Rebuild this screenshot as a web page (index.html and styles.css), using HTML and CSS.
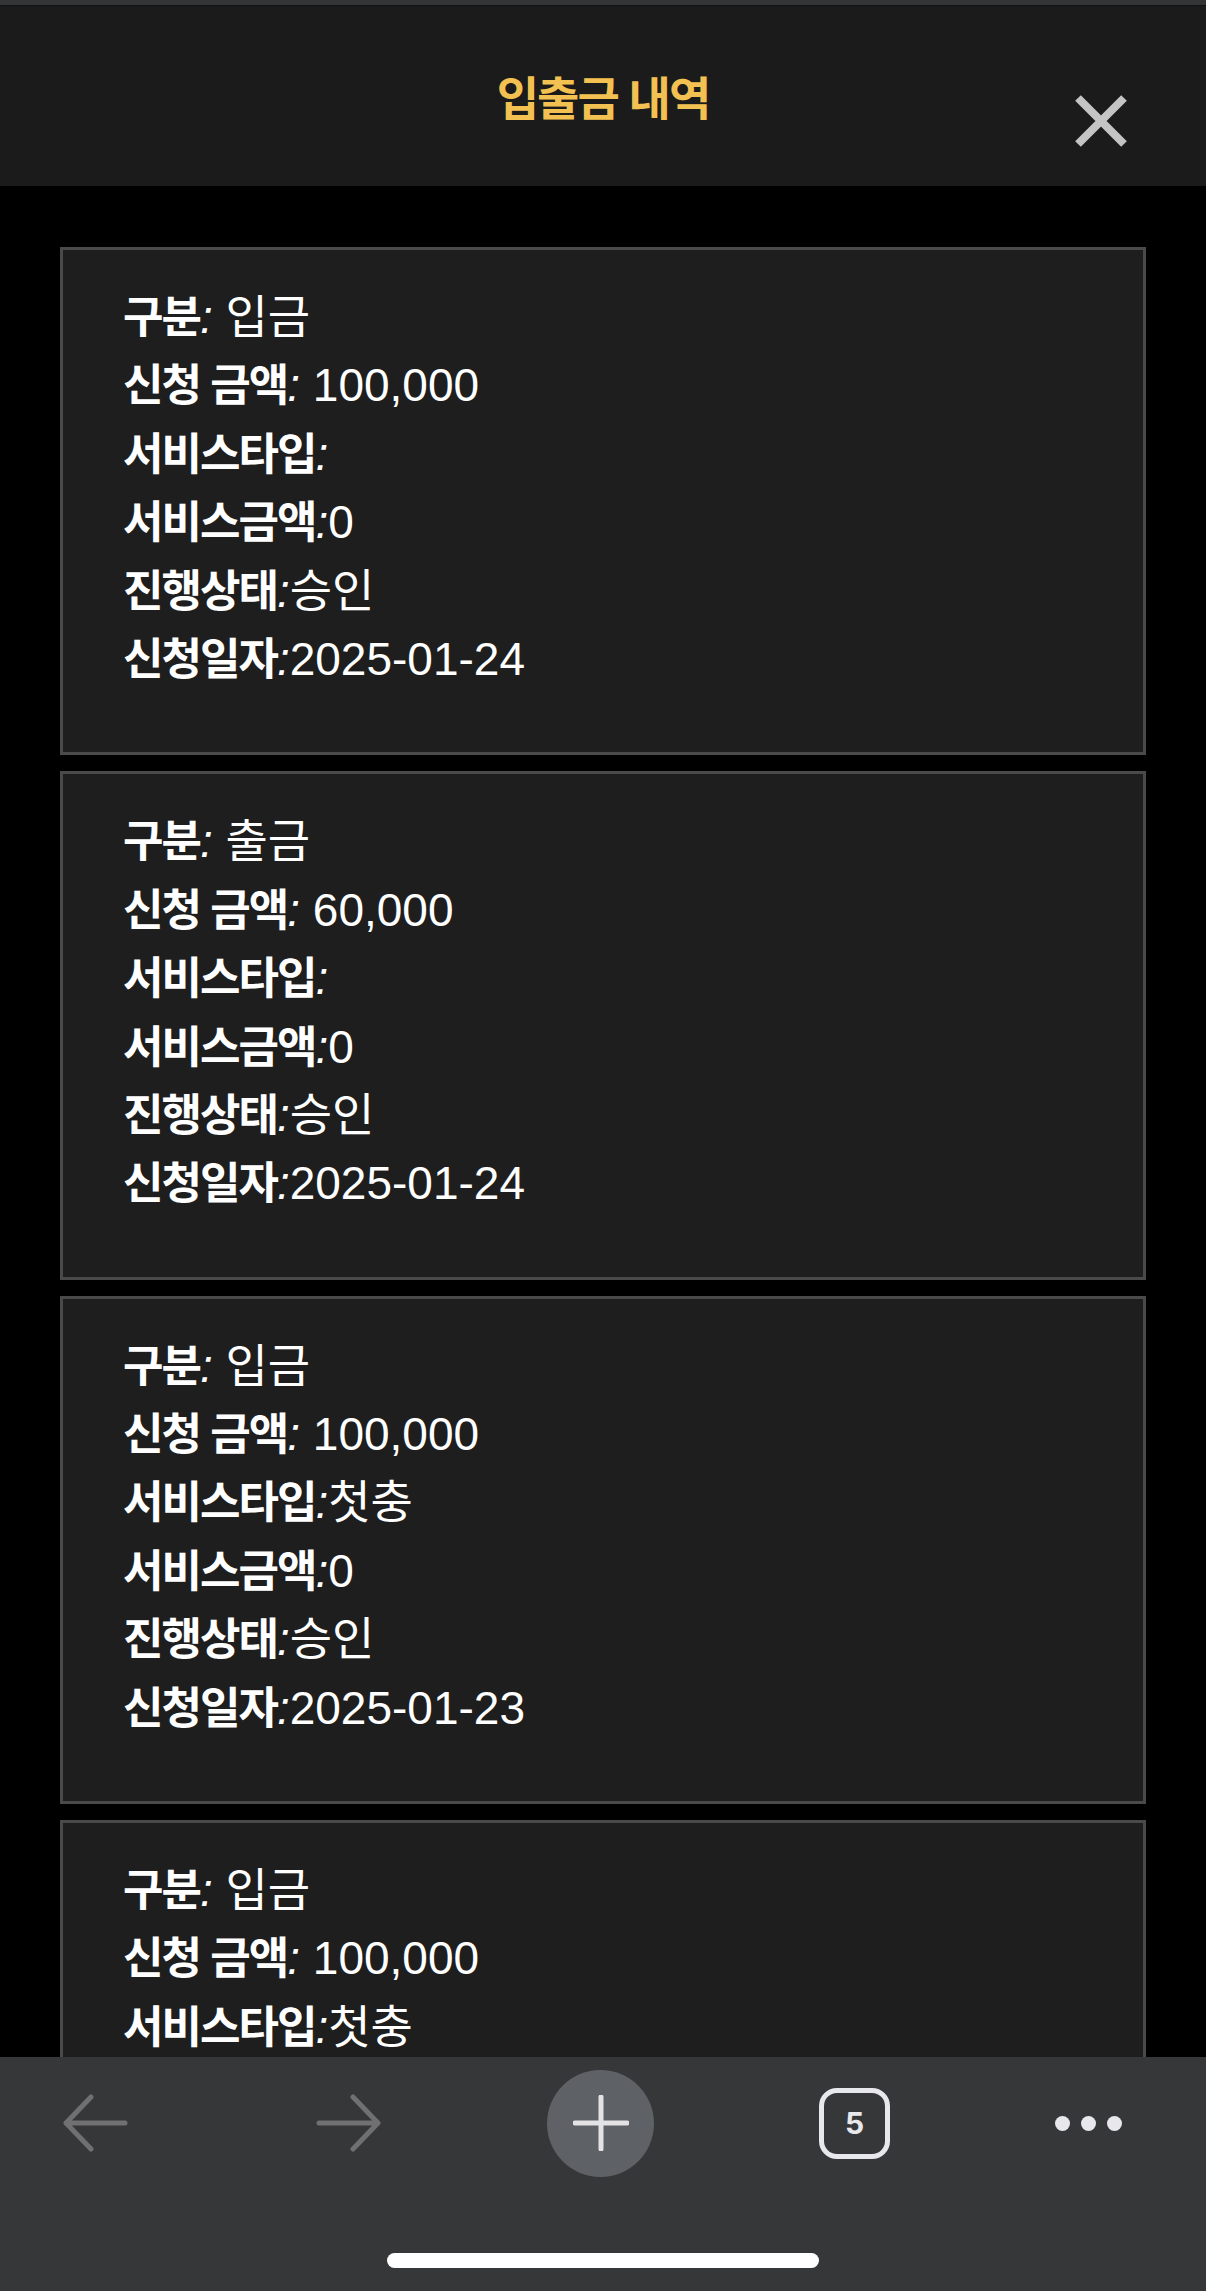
FILE: index.html
```html
<!DOCTYPE html>
<html lang="ko">
  <head>
    <meta charset="UTF-8" />
    <meta name="viewport" content="width=device-width, initial-scale=1.0" />
    <title>입출금 내역</title>
    <link rel="stylesheet" href="styles.css">
  </head>
  <body>
    <div class="status-strip"></div>
    <header class="header">
      <h1 class="title">입출금 내역</h1>
      <button class="close-btn" aria-label="닫기">
        <svg width="54" height="54" viewBox="0 0 54 54">
          <path d="M4 4 L50 50 M50 4 L4 50" stroke="#c4c4c4" stroke-width="8" fill="none" />
        </svg>
      </button>
    </header>

    <main class="history-list">
      <div class="history-card">
        <p><strong>구분</strong><em>:</em> 입금</p>
        <p><strong>신청 금액</strong><em>:</em> 100,000</p>
        <p><strong>서비스타입</strong><em>:</em></p>
        <p><strong>서비스금액</strong><em>:</em>0</p>
        <p><strong>진행상태</strong><em>:</em>승인</p>
        <p><strong>신청일자</strong><em>:</em>2025-01-24</p>
      </div>
      <div class="history-card">
        <p><strong>구분</strong><em>:</em> 출금</p>
        <p><strong>신청 금액</strong><em>:</em> 60,000</p>
        <p><strong>서비스타입</strong><em>:</em></p>
        <p><strong>서비스금액</strong><em>:</em>0</p>
        <p><strong>진행상태</strong><em>:</em>승인</p>
        <p><strong>신청일자</strong><em>:</em>2025-01-24</p>
      </div>
      <div class="history-card">
        <p><strong>구분</strong><em>:</em> 입금</p>
        <p><strong>신청 금액</strong><em>:</em> 100,000</p>
        <p><strong>서비스타입</strong><em>:</em>첫충</p>
        <p><strong>서비스금액</strong><em>:</em>0</p>
        <p><strong>진행상태</strong><em>:</em>승인</p>
        <p><strong>신청일자</strong><em>:</em>2025-01-23</p>
      </div>
      <div class="history-card">
        <p><strong>구분</strong><em>:</em> 입금</p>
        <p><strong>신청 금액</strong><em>:</em> 100,000</p>
        <p><strong>서비스타입</strong><em>:</em>첫충</p>
        <p><strong>서비스금액</strong><em>:</em>0</p>
        <p><strong>진행상태</strong><em>:</em>승인</p>
        <p><strong>신청일자</strong><em>:</em>2025-01-23</p>
      </div>
    </main>

    <!-- browser toolbar -->
    <nav class="toolbar">
      <div class="toolbar-row">
        <span class="tb-item tb-back">
          <svg width="66" height="58" viewBox="0 0 66 58">
            <path d="M63 29 H4 M29 3 L4 29 L29 55" stroke="#707072" stroke-width="5" stroke-linecap="round" stroke-linejoin="round" fill="none" />
          </svg>
        </span>
        <span class="tb-item tb-forward">
          <svg width="66" height="58" viewBox="0 0 66 58">
            <path d="M3 29 H62 M37 3 L62 29 L37 55" stroke="#707072" stroke-width="5" stroke-linecap="round" stroke-linejoin="round" fill="none" />
          </svg>
        </span>
        <span class="tb-item tb-new">
          <svg width="56" height="56" viewBox="0 0 56 56">
            <path d="M28 2 V54 M2 28 H54" stroke="#e3e3e6" stroke-width="5" stroke-linecap="round" fill="none" />
          </svg>
        </span>
        <span class="tb-item tb-tabs">5</span>
        <span class="tb-item tb-more">
          <i></i><i></i><i></i>
        </span>
      </div>
      <div class="home-indicator"></div>
    </nav>
  </body>
</html>
```

FILE: styles.css
```css
body {
  font-family: "Liberation Sans", "Noto Sans CJK KR", sans-serif;
  background-color: #000;
  color: #fff;
  margin: 0;
  padding: 0;
}

.status-strip {
  height: 5px;
  background-color: #343537;
  border-bottom: 1px solid #111;
}

.header {
  position: relative;
  height: 180px;
  background-color: #1b1b1b;
  display: flex;
  justify-content: center;
}

.title {
  margin: 0;
  padding-top: 61px;
  font-family: "Noto Sans CJK KR", sans-serif;
  font-size: 46px;
  line-height: 56px;
  font-weight: 700;
  letter-spacing: -2px;
  color: #f3c152;
}

.close-btn {
  position: absolute;
  right: 78px;
  top: 88px;
  width: 54px;
  height: 54px;
  padding: 0;
  border: none;
  background: none;
}

.close-btn svg {
  display: block;
}

.history-list {
  display: flex;
  flex-direction: column;
  gap: 16px;
  padding: 61px 60px 0;
}

.history-card {
  background-color: #1e1e1e;
  border: 3px solid #4a4a4a;
  padding: 33px 60px 59px;
}

.history-card p {
  margin: 0;
  font-size: 46px;
  line-height: 68.4px;
  height: 68.4px;
  white-space: nowrap;
}

.history-card strong {
  font-family: "Noto Sans CJK KR", sans-serif;
  font-weight: 700;
  font-size: 44px;
  line-height: 1;
  letter-spacing: -2px;
}

.history-card em {
  font-style: italic;
}

/* Bottom browser toolbar */
.toolbar {
  position: fixed;
  left: 0;
  right: 0;
  bottom: 0;
  height: 234px;
  background-color: #363739;
}

.toolbar-row {
  display: flex;
  align-items: center;
  height: 132px;
  padding-left: 62px;
  gap: 165px;
}

.tb-item {
  display: flex;
  align-items: center;
  justify-content: center;
}

.tb-forward {
  margin-left: 23px;
}

.tb-new {
  width: 107px;
  height: 107px;
  border-radius: 50%;
  background-color: #5e6165;
}

.tb-tabs {
  box-sizing: border-box;
  width: 71px;
  height: 71px;
  border: 5px solid #e8e8ec;
  border-radius: 18px;
  font-family: "Inter", sans-serif;
  font-weight: 700;
  font-size: 30px;
  color: #e8e8ec;
}

.tb-more {
  gap: 11px;
}

.tb-more i {
  display: block;
  width: 15px;
  height: 15px;
  border-radius: 50%;
  background-color: #e8e8ec;
}

.home-indicator {
  width: 432px;
  height: 15px;
  margin: 64px auto 0;
  border-radius: 8px;
  background-color: #fff;
}
```
